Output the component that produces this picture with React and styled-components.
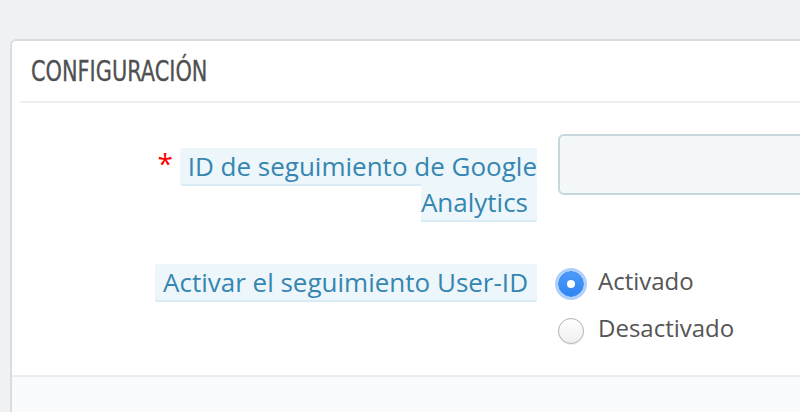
import styled, { createGlobalStyle } from 'styled-components';

const GlobalStyle = createGlobalStyle`
  html, body {
    margin: 0;
    padding: 0;
    background: #eff1f2;
    overflow: hidden;
    font-family: "Open Sans", "Liberation Sans", sans-serif;
  }
`;

const Page = styled.div`
  height: 412px;
  padding: 39px 0 0 10px;
  box-sizing: border-box;
  overflow: hidden;
`;

const Panel = styled.section`
  width: 900px;
  background: #fff;
  border: 2px solid #dadde0;
  border-radius: 6px;
  overflow: hidden;
`;

const Heading = styled.h3`
  margin: 0 0 0 8px;
  height: 60px;
  padding-left: 11px;
  display: flex;
  align-items: center;
  border-bottom: 2px solid #eeeeee;
  font-family: "DejaVu Sans Condensed", "DejaVu Sans", sans-serif;
  font-stretch: condensed;
  font-weight: normal;
  font-size: 29px;
  color: #4f5052;
  text-transform: uppercase;
`;

const HeadingText = styled.span`
  display: inline-block;
  transform: scaleX(0.8);
  transform-origin: left center;
  -webkit-text-stroke: 0.3px #4f5052;
`;

const Body = styled.div`
  padding: 31px 0 21px;
  display: flex;
  flex-direction: column;
  gap: 30px;
`;

const Row = styled.div`
  display: grid;
  grid-template-columns: 420px 1fr;
  column-gap: 21px;
  padding-left: 105px;
`;

const Label = styled.label`
  display: block;
  padding-top: 14px;
  text-align: right;
  font-size: 26px;
  line-height: 36px;
`;

const Required = styled.span`
  color: #ff0000;
  font-size: 28px;
  line-height: 1;
  vertical-align: 2px;
`;

const Tip = styled.span`
  color: #3586b0;
  background: #edf6fa;
  border-bottom: 2px solid #d9ebf4;
  border-radius: 3px;
  padding: 0 9px 0 8px;
`;

const TextInput = styled.input`
  display: block;
  width: 400px;
  height: 61px;
  box-sizing: border-box;
  border: 2px solid #c7d6db;
  border-radius: 6px;
  background: #f5f8f9;
  outline: none;
`;

const RadioGroup = styled.div`
  padding-top: 10px;
  display: flex;
  flex-direction: column;
`;

const RadioRow = styled.label`
  display: flex;
  align-items: center;
  gap: 14px;
  height: 47px;
  font-size: 24px;
  color: #555;
`;

const RadioMark = styled.span`
  flex: none;
  width: 26px;
  height: 26px;
  box-sizing: border-box;
  border-radius: 50%;
  display: flex;
  align-items: center;
  justify-content: center;
  border: ${(p) => (p.$checked ? '1px solid #3a8cf5' : '1.5px solid #b3b3b3')};
  background: ${(p) =>
    p.$checked ? 'linear-gradient(#4d9bf8, #2f84f3)' : 'linear-gradient(#ffffff, #f0f0f0)'};
  box-shadow: ${(p) =>
    p.$checked ? '0 0 0 3px rgba(80, 150, 245, 0.45)' : '0 1px 1px rgba(0, 0, 0, 0.08)'};

  &::after {
    content: '';
    display: ${(p) => (p.$checked ? 'block' : 'none')};
    width: 8px;
    height: 8px;
    border-radius: 50%;
    background: #fff;
  }
`;

const RadioText = styled.span`
  line-height: 32px;
  padding-bottom: 6px;
`;

const Footer = styled.div`
  height: 40px;
  border-top: 2px solid #eaedef;
  background: #fafbfc;
`;

export default function App() {
  return (
    <>
      <GlobalStyle />
      <Page>
        <Panel>
          <Heading>
            <HeadingText>Configuración</HeadingText>
          </Heading>
          <Body>
            <Row>
              <Label>
                <Required>*</Required> <Tip>ID de seguimiento de Google Analytics</Tip>
              </Label>
              <TextInput type="text" />
            </Row>
            <Row>
              <Label>
                <Tip>Activar el seguimiento User-ID</Tip>
              </Label>
              <RadioGroup>
                <RadioRow>
                  <RadioMark $checked />
                  <RadioText>Activado</RadioText>
                </RadioRow>
                <RadioRow>
                  <RadioMark />
                  <RadioText>Desactivado</RadioText>
                </RadioRow>
              </RadioGroup>
            </Row>
          </Body>
          <Footer />
        </Panel>
      </Page>
    </>
  );
}
